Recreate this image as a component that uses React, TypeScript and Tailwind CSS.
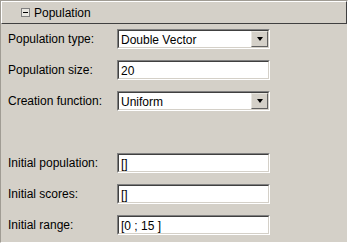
import React from "react";

function Field({ value, combo }: { value: string; combo?: boolean }) {
  return (
    <div className="w-[153px] h-[20px] border-t border-l border-[#808080] border-b border-r border-b-white border-r-white">
      <div className="h-full flex items-center bg-white border-t border-l border-[#404040] border-b border-r border-b-[#d4d0c8] border-r-[#d4d0c8]">
        <span className="flex-1 pl-[2px] pt-px text-[12px] leading-none text-black whitespace-nowrap">{value}</span>
        {combo && (
          <div className="w-[17px] h-full bg-[#d4d0c8] border-t border-l border-[#e8e6e0] border-b border-r border-b-[#606060] border-r-[#606060] flex items-center justify-center">
            <div className="w-0 h-0 border-l-[3.5px] border-r-[3.5px] border-t-[4px] border-l-transparent border-r-transparent border-t-black" />
          </div>
        )}
      </div>
    </div>
  );
}

function Row({ label, value, combo }: { label: string; value: string; combo?: boolean }) {
  return (
    <div className="flex items-center h-[20px]">
      <span className="w-[109px] text-[12px] text-black whitespace-nowrap">{label}</span>
      <Field value={value} combo={combo} />
    </div>
  );
}

export default function App() {
  return (
    <div className="w-[354px] h-[248px] bg-white" style={{ fontFamily: '"Liberation Sans", Arial, sans-serif' }}>
      <div className="w-[348px] h-[243px] bg-[#d4d0c8] border-l border-t border-[#a09c94] border-r border-b border-r-white border-b-white">
        {/* header */}
        <div className="h-[23px] flex items-center border-t border-l border-white border-b border-r border-b-[#404040] border-r-[#404040] pl-[19px]">
          <div className="w-[9px] h-[9px] border border-[#808080] bg-[#e8e6e0] flex items-center justify-center">
            <div className="w-[5px] h-px bg-black" />
          </div>
          <span className="ml-[4px] text-[12px] text-black">Population</span>
        </div>

        {/* body */}
        <div className="flex flex-col gap-[11px] pt-[5px] pl-[7px]">
          <Row label="Population type:" value="Double Vector" combo />
          <Row label="Population size:" value="20" />
          <Row label="Creation function:" value="Uniform" combo />
          <div className="h-[20px]" />
          <Row label="Initial population:" value="[]" />
          <Row label="Initial scores:" value="[]" />
          <Row label="Initial range:" value="[0 ; 15 ]" />
        </div>
      </div>
    </div>
  );
}
